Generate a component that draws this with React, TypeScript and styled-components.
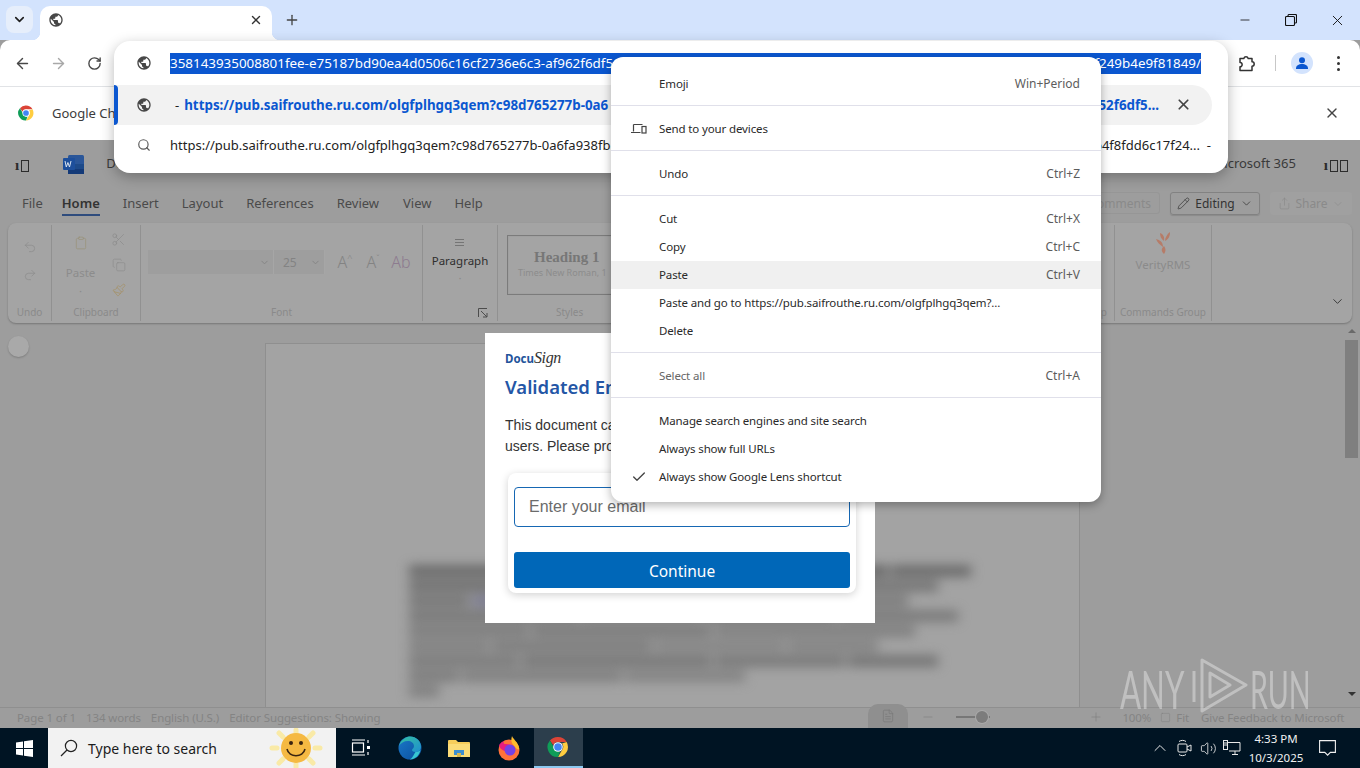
import React from 'react';
import styled, { createGlobalStyle } from 'styled-components';
import { ArrowLeft, ArrowRight, RotateCw, ChevronDown, X, Plus, Search, Scissors, Copy, Paintbrush, Pencil, Share, Undo2, Redo2, Clipboard, FileText, Minus, ChevronUp, Volume2, Check, Square } from 'lucide-react';

const Global = createGlobalStyle`
  html, body { margin: 0; padding: 0; width: 1360px; height: 768px; overflow: hidden; background: #9d9d9d; }
  * { box-sizing: border-box; }
  body { font-family: "Noto Sans", "Liberation Sans", sans-serif; }
`;
const Screen = styled.div`position: relative; width: 1360px; height: 768px; overflow: hidden; display: flex; flex-direction: column; background: #9d9d9d;`;

/* ---------- browser chrome ---------- */
const TabStrip = styled.div`height: 40px; background: #d3e3fd; display: flex; align-items: flex-end; padding-left: 6px; flex: none;`;
const TabSearch = styled.div`width: 27px; height: 27px; margin-bottom: 7px; border-radius: 8px; background: #e6eefb; display: flex; align-items: center; justify-content: center; color: #1f1f1f;`;
const Tab = styled.div`
  position: relative; width: 232px; height: 34px; margin-left: 7px; background: #fff; border-radius: 10px 10px 0 0;
  display: flex; align-items: center; justify-content: space-between; padding: 0 9px 6px 8px; color: #333;
  &::after { content: ""; position: absolute; right: -8px; bottom: 0; width: 8px; height: 8px; background: radial-gradient(circle at 100% 0, transparent 8px, #fff 8.5px); }
  &::before { content: ""; position: absolute; left: -8px; bottom: 0; width: 8px; height: 8px; background: radial-gradient(circle at 0 0, transparent 8px, #fff 8.5px); }
`;
const NewTab = styled.div`margin: 0 0 12px 12px; color: #444; display: flex;`;
const WinControls = styled.div`margin-left: auto; display: flex; height: 40px; align-items: center; color: #111;`;
const WinBtn = styled.div`width: 46px; display: flex; justify-content: center;`;
const Toolbar = styled.div`height: 47px; background: #fff; border-radius: 10px 10px 0 0; border-bottom: 1px solid #e1e3e6; display: flex; align-items: center; padding: 0 20px 0 13px; flex: none; color: #444;`;
const NavBtn = styled.div<{ $dim?: boolean }>`width: 36px; display: flex; justify-content: center; color: ${p => p.$dim ? '#a8a8a8' : '#474747'}; &:first-child { margin-left: -9px; }`;
const ToolRight = styled.div`margin-left: auto; display: flex; align-items: center; color: #333;`;
const Divider = styled.div`width: 1px; height: 16px; background: #c7c7c7; margin: 0 15px 0 18px;`;
const Avatar = styled.div`width: 22px; height: 22px; border-radius: 50%; background: #d3e3fd; display: flex; align-items: center; justify-content: center; margin-right: 24px;`;
const Kebab = styled.div`display: flex; flex-direction: column; gap: 3px; & i { width: 3px; height: 3px; border-radius: 50%; background: #333; }`;
const InfoBar = styled.div`height: 53px; background: #fff; flex: none; display: flex; align-items: center; padding: 0 20px 2px 17px; font-size: 13px; color: #3c3c3c;`;
const InfoText = styled.span`margin-left: 17px;`;
const InfoClose = styled.div`margin-left: auto; color: #444; display: flex;`;

/* ---------- omnibox popup ---------- */
const Popup = styled.div`position: absolute; left: 114px; top: 41px; width: 1114px; height: 132px; background: #fff; border-radius: 16px; box-shadow: 0 4px 14px rgba(0,0,0,.28); z-index: 5; font-size: 13px; color: #222;`;
const PopRow = styled.div<{ $h: number; $sel?: boolean }>`
  height: ${p => p.$h}px; display: flex; align-items: center; padding-left: 22px; position: relative;
  ${p => p.$sel ? `background: #f2f2f2; margin-right: 16px; border-radius: 0 20px 20px 0; &::before { content: ""; position: absolute; left: 0; top: 0; bottom: 0; width: 4px; background: #0b57d0; border-radius: 0 4px 4px 0; }` : ''}
`;
const GlobeSlot = styled.div`width: 34px; flex: none; display: flex; color: #5a5a5a;`;
const SearchSlot = styled.div`width: 34px; flex: none; display: flex; padding-left: 1px;`;
const Highlight = styled.div`width: 1031px; height: 21px; background: #0b57d0; color: #fff; display: flex; justify-content: space-between; align-items: center; white-space: nowrap; overflow: hidden; font-size: 13.4px;`;
const SelMain = styled.div`flex: 1; display: flex; align-items: center; padding-left: 5px; white-space: nowrap; overflow: hidden; margin-right: 53px; justify-content: space-between; font-size: 13px;`;
const Dash = styled.span`margin-right: 5px;`;
const Strong = styled.span`color: #0b57d0; font-weight: 700; font-size: 13.35px;`;
const CloseMatch = styled.div`position: absolute; right: 20px; top: 11px; color: #444; display: flex;`;
const PlainRow = styled.div`flex: 1; display: flex; justify-content: space-between; white-space: nowrap; overflow: hidden; padding-right: 17px; font-size: 13px;`;

/* ---------- context menu ---------- */
const Menu = styled.div`position: absolute; left: 611px; top: 57px; width: 490px; height: 445px; background: #fff; border-radius: 12px; box-shadow: 0 3px 10px rgba(0,0,0,.3); padding: 13px 0 11px; z-index: 6; font-size: 11.5px; letter-spacing: -.13px; color: #2a2a2a;`;
const MenuItem = styled.div<{ $hover?: boolean; $muted?: boolean }>`height: 28px; display: flex; align-items: center; padding: 0 21px 1px 48px; position: relative; background: ${p => p.$hover ? '#f0f0f0' : 'transparent'}; color: ${p => p.$muted ? '#666' : '#2a2a2a'};`;
const Shortcut = styled.span`margin-left: auto; color: #5c5c5c; font-size: 12px; letter-spacing: 0;`;
const MenuIcon = styled.span`position: absolute; left: 20px; top: 6px; display: flex; color: #444;`;
const MenuSep = styled.div`height: 1px; background: #e0e0ea; margin: 7px 0 9px;`;

/* ---------- word ---------- */
const Word = styled.div`flex: 1; display: flex; flex-direction: column; background: #9d9d9d; color: #333; font-size: 13px; min-height: 0;`;
const TitleRow = styled.div`height: 46px; display: flex; align-items: center; padding: 0 12px 0 15px; flex: none;`;
const Tofu = styled.span`display: inline-block; width: 8px; height: 12px; border: 1px solid #2c2c2c; margin-left: 2px;`;
const TofuText = styled.span`font-family: "Liberation Serif", serif; font-size: 15px; font-weight: 700; color: #2c2c2c; display: flex; align-items: center; margin-top: 5px;`;
const WordLogo = styled.div`margin-left: 34px; width: 21px; height: 19px; display: flex; margin-top: 2px;`;
const DocName = styled.span`margin-left: 22px; color: #3a3a3a;`;
const Brand = styled.span`margin-left: auto; margin-right: 28px; color: #3a3a3a; font-size: 13px;`;
const TabRow = styled.div`height: 37px; display: flex; align-items: flex-start; padding: 0 8px 0 22px; flex: none;`;
const RibbonTab = styled.div<{ $x: number; $active?: boolean }>`
  margin-right: ${p => p.$x}px; height: 30px; padding-top: 8px; color: ${p => p.$active ? '#333' : '#4a4a4a'}; font-weight: ${p => p.$active ? 600 : 400}; font-size: 13px;
  ${p => p.$active ? 'border-bottom: 2px solid #2f4c7d;' : ''}
`;
const TabActions = styled.div`margin-left: auto; display: flex; align-items: flex-start; gap: 10px; padding-top: 6px; font-size: 12px;`;
const CommentBtn = styled.div`width: 72px; height: 22px; border: 1px solid #969696; border-radius: 3px; color: #8a8a8a; display: flex; align-items: center; justify-content: flex-end; padding-right: 8px;`;
const EditBtn = styled.div`width: 90px; height: 23px; border: 1px solid #828282; border-radius: 3px; display: flex; align-items: center; justify-content: center; gap: 5px; color: #333; box-shadow: 0 1px 1px rgba(0,0,0,.12);`;
const ShareBtn = styled.div`width: 82px; height: 23px; border-radius: 3px; background: #a0a0a0; display: flex; align-items: center; justify-content: center; gap: 4px; color: #8a8a8a;`;
const Ribbon = styled.div`margin: 0 8px; height: 100px; background: #a4a4a4; border-radius: 8px; display: flex; flex: none; box-shadow: 0 1px 2px rgba(0,0,0,.25); color: #8c8c8c; font-size: 11.5px; padding: 2px 0 2px;`;
const Group = styled.div<{ $w: number; $plain?: boolean }>`
  width: ${p => p.$w}px; flex: none; display: flex; flex-direction: column; align-items: center; position: relative;
  border-right: ${p => p.$plain ? 'none' : '1px solid #919191'};
`;
const GroupBody = styled.div<{ $top?: number; $start?: boolean }>`flex: 1; width: 100%; display: flex; align-items: flex-start; justify-content: ${p => p.$start ? 'flex-start' : 'center'}; padding-top: ${p => p.$top || 0}px; padding-left: ${p => p.$start ? 6 : 0}px;`;
const GroupLabel = styled.div`font-size: 10px; height: 16px; line-height: 15px; color: #8a8a8a; white-space: nowrap;`;
const LabelRow = styled.div`width: 100%; display: flex; justify-content: space-between; padding: 0 7px 0 58px;`;
const Stack = styled.div<{ $gap: number }>`display: flex; flex-direction: column; align-items: center; gap: ${p => p.$gap}px; color: #8b8b8b;`;
const PasteCol = styled.div`display: flex; flex-direction: column; align-items: center; width: 45px; margin-top: 11px; margin-right: 8px; color: #8c8c8c; font-size: 11.5px; line-height: 16px;`;
const PasteLabel = styled.span`margin-top: 15px;`;
const PasteDot = styled.span`margin-top: 2px;`;
const ToolCol = styled.div`margin-top: 7px; display: flex; flex-direction: column; align-items: center; gap: 11px; color: #8b8b8b;`;
const Row = styled.div`display: flex; align-items: center;`;
const FontCombo = styled.div<{ $w: number }>`width: ${p => p.$w}px; height: 24px; background: #9e9e9e; display: flex; align-items: center; justify-content: flex-end; padding-right: 3px; border-right: 1px solid #a6a6a6; color: #838383; font-size: 12px;`;
const SizeVal = styled.span`margin-right: auto; padding-left: 9px;`;
const FontBtn = styled.span<{ $tone?: string }>`width: 28px; text-align: center; color: ${p => p.$tone || '#838383'}; font-size: 16px; font-weight: 300; position: relative; & sup { font-size: 9px; line-height: 0; }`;
const FontBtns = styled.div`display: flex; margin-left: 6px;`;
const ParaIcon = styled.div`display: flex; flex-direction: column; gap: 2px; & i { width: 9px; height: 1px; background: #757575; }`;
const ParaLabel = styled.span`color: #2f2f2f; margin-top: 5px;`;
const Launcher = styled.div`position: absolute; right: 9px; bottom: 3px; display: flex;`;
const StyleBox = styled.div`width: 107px; margin-left: 9px; height: 60px; margin-top: 10px; align-self: flex-start; border: 1px solid #7b7b7b; box-shadow: inset 0 0 0 1px #a0a0a0; padding: 13px 0 0 10px; overflow: hidden; white-space: nowrap;`;
const StyleHead = styled.div`font-family: "Liberation Serif", serif; font-weight: 700; font-size: 15px; color: #777; margin-left: 16px;`;
const StyleSub = styled.div`font-size: 9px; color: #8c8c8c;`;
const Canvas = styled.div`flex: 1; display: flex; min-height: 0; position: relative; padding: 20px 0 0 8px;`;
const SideBtn = styled.div`width: 21px; height: 21px; border-radius: 50%; background: #a9a9a9; flex: none; margin-top: -7px; box-shadow: 0 1px 2px rgba(0,0,0,.2);`;
const Page = styled.div`width: 815px; margin-left: 236px; background: #a3a3a3; border: 1px solid #8f8f8f; border-bottom: none; padding: 222px 93px 0 143px; overflow: hidden;`;
const BlurBlock = styled.div`filter: blur(6px); display: flex; flex-direction: column; gap: 5px;`;
const BlurLine = styled.div`display: flex; gap: 3px; height: 10px;`;
const BlurWord = styled.div<{ $w: number; $tone: string }>`height: 10px; width: ${p => p.$w}px; background: ${p => p.$tone};`;
const ScrollBar = styled.div`position: absolute; right: 2px; top: 6px; bottom: 11px; width: 13px; display: flex; flex-direction: column; align-items: center; color: #444;`;
const Thumb = styled.div`width: 13px; height: 118px; background: #7f7f7f; margin-top: 7px; margin-bottom: auto;`;
const Arrow = styled.div<{ $up?: boolean }>`width: 0; height: 0; border-left: 4px solid transparent; border-right: 4px solid transparent; ${p => p.$up ? 'border-bottom: 4px solid #6a6a6a;' : 'border-top: 4px solid #333;'}`;
const StatusBar = styled.div`height: 21px; flex: none; border-top: 1px solid #8f8f8f; display: flex; align-items: center; padding: 0 17px 2px; color: #848484; font-size: 11.5px; letter-spacing: -.1px; position: relative; white-space: nowrap; & > * { flex: none; }`;
const StatusText = styled.span<{ $gap?: number; $ml?: number }>`margin-right: ${p => p.$gap || 0}px; margin-left: ${p => p.$ml || 0}px;`;
const ViewBtn = styled.div`margin-left: 488px; width: 40px; height: 24px; margin-top: -2px; background: #8f8f8f; border-radius: 10px 10px 0 0; display: flex; align-items: center; justify-content: center; color: #7a7a7a;`;
const Slider = styled.div`width: 34px; height: 2px; background: #777; margin-left: 21px; position: relative; &::after { content: ""; position: absolute; right: 2px; top: -5px; width: 12px; height: 12px; border-radius: 50%; background: #7c7c7c; box-shadow: 0 0 0 1px #a9a9a9; }`;
const StatusIcon = styled.div<{ $ml: number }>`margin-left: ${p => p.$ml}px; display: flex; color: #7d7d7d;`;

/* ---------- modal ---------- */
const Modal = styled.div`position: absolute; left: 485px; top: 333px; width: 390px; height: 290px; background: #fff; padding: 16px 20px 0; z-index: 3; font-family: "Liberation Sans", Arial, sans-serif;`;
const Logo = styled.div`display: flex; align-items: baseline; height: 25px; color: #23549b; font-family: "Noto Sans", sans-serif; font-weight: 700; font-size: 11.5px;`;
const LogoScript = styled.span`font-family: "Liberation Serif", serif; font-style: italic; font-weight: 400; color: #333; font-size: 16px; letter-spacing: -.4px;`;
const ModalTitle = styled.div`font-family: "Noto Sans", sans-serif; font-size: 18.5px; font-weight: 600; color: #2456a6; line-height: 26px; white-space: nowrap;`;
const ModalBody = styled.div`margin-top: 15px; font-size: 14px; line-height: 21px; color: #333; white-space: nowrap;`;
const Card = styled.div`position: absolute; left: 23px; top: 140px; width: 348px; height: 120px; background: #fff; border-radius: 8px; box-shadow: 0 2px 8px rgba(0,0,0,.18); padding: 14px 6px 0;`;
const EmailInput = styled.div`height: 40px; border: 1px solid #1667b3; border-radius: 4px; padding-left: 14px; font-size: 16px; color: #6b6b6b; display: flex; align-items: center;`;
const Continue = styled.div`margin-top: 25px; height: 36px; background: #0067b8; border-radius: 3px; color: #fff; display: flex; align-items: center; justify-content: center; padding-top: 1px; font-family: "Noto Sans", sans-serif; font-size: 15.5px;`;

/* ---------- watermark ---------- */
const Watermark = styled.div`position: absolute; left: 1120px; top: 658px; height: 55px; display: flex; align-items: center; z-index: 2; color: rgba(255,255,255,.36); font-family: "Lato", "Liberation Sans", sans-serif; font-weight: 400; font-size: 52px; line-height: 1;`;
const WmText = styled.span<{ $w: number; $scale: number }>`display: block; width: ${p => p.$w}px; white-space: nowrap; margin-top: 6px; transform-origin: left center; transform: scaleX(${p => p.$scale});`;
const WmPlay = styled.div`width: 68px; padding-left: 10px; display: flex; flex: none;`;

/* ---------- taskbar ---------- */
const Taskbar = styled.div`height: 40px; background: #001423; flex: none; display: flex; align-items: stretch; color: #fff;`;
const StartBtn = styled.div`width: 48px; display: flex; align-items: center; justify-content: center;`;
const SearchBox = styled.div`width: 288px; background: #f2f2f2; display: flex; align-items: center; color: #1c1c1c; font-size: 14px; padding-left: 12px; position: relative; overflow: hidden;`;
const SearchLabel = styled.span`margin-left: 10px;`;
const Sun = styled.div`position: absolute; right: 11px; top: 0; display: flex;`;
const TaskIcon = styled.div<{ $active?: boolean }>`width: 49.4px; display: flex; align-items: center; justify-content: center; ${p => p.$active ? 'background: #2c3e4c; border-bottom: 2px solid #8cc8f0;' : ''}`;
const Tray = styled.div`margin-left: auto; display: flex; align-items: center; color: #e8e8e8;`;
const TrayIcon = styled.div`width: 24px; display: flex; justify-content: center;`;
const Clock = styled.div`width: 62px; margin-left: 1px; text-align: center; font-size: 11.5px; line-height: 19px; color: #f0f0f0;`;
const Notify = styled.div`margin: 0 24px 0 12px; display: flex;`;

/* ---------- drawings ---------- */
const Globe = ({ size = 16 }: { size?: number }) => (
  <svg width={size} height={size} viewBox="0 0 24 24" fill="#474747"><path d="M12 2C6.48 2 2 6.48 2 12s4.48 10 10 10 10-4.48 10-10S17.52 2 12 2zm-1 17.93c-3.95-.49-7-3.85-7-7.93 0-.62.08-1.21.21-1.79L9 15v1c0 1.1.9 2 2 2v1.93zm6.9-2.54c-.26-.81-1-1.39-1.9-1.39h-1v-3c0-.55-.45-1-1-1H8v-2h2c.55 0 1-.45 1-1V7h2c1.1 0 2-.9 2-2v-.41c2.93 1.19 5 4.06 5 7.41 0 2.08-.8 3.97-2.1 5.39z" /></svg>
);
const ChromeLogo = ({ size = 18 }: { size?: number }) => (
  <svg width={size} height={size} viewBox="0 0 48 48">
    <path fill="#db4437" d="M24 4a20 20 0 0 1 17.3 10H24a10 10 0 0 0-9.4 6.6L7.9 11A20 20 0 0 1 24 4z" />
    <path fill="#ffcd40" d="M41.3 14A20 20 0 0 1 24 44l8.7-15A10 10 0 0 0 32 17z" />
    <path fill="#0f9d58" d="M7.9 11l8.7 15a10 10 0 0 0 11.6 7.5L24 44A20 20 0 0 1 7.9 11z" />
    <circle cx="24" cy="24" r="9.6" fill="#fff" /><circle cx="24" cy="24" r="7.6" fill="#4285f4" />
  </svg>
);
const WordIcon = () => (
  <svg width="21" height="19" viewBox="0 0 21 19">
    <rect x="5" y="0" width="16" height="19" rx="1.5" fill="#2a5699" /><rect x="5" y="9" width="16" height="5" fill="#1d4a8a" /><rect x="5" y="14" width="16" height="5" fill="#143a78" />
    <rect x="0" y="3" width="12" height="12" rx="1" fill="#1d4f9c" />
    <path d="M2 6l1.3 6 1.6-4.5L6.5 12 8 6" stroke="#d9e3f0" strokeWidth="1" fill="none" />
  </svg>
);
const ExtensionIcon = () => (
  <svg width="20" height="20" viewBox="0 0 20 20" fill="none" stroke="#333" strokeWidth="1.5" strokeLinejoin="round">
    <path d="M3 5.5h3.8a2.3 2.3 0 0 1 4.4 0H15v3.3a2.2 2.2 0 0 1 0 4.4v4.300H3v-3.700a2 2 0 0 0 0-4.300z" />
  </svg>
);
const WinLogo = () => (
  <svg width="17" height="17" viewBox="0 0 17 17" fill="#fff"><path d="M0 2.4L7 1.4V8H0zM8 1.3L17 0V8H8zM0 9h7v6.6l-7-1zM8 9h9v8l-9-1.3z" /></svg>
);
const SearchGlass = () => (
  <svg width="18" height="18" viewBox="0 0 18 18" fill="none" stroke="#222" strokeWidth="1.2"><circle cx="11" cy="7" r="5.6" /><path d="M7 11l-6 6" /></svg>
);
const SmileSun = () => (
  <svg width="58" height="40" viewBox="0 0 58 40">
    <g stroke="#fbe99a" strokeWidth="5" strokeLinecap="round" opacity=".85">
      <path d="M29 2v3M29 36v3M5 20h5M48 20h5M12 5l4 4M46 5l-4 4M12 35l4-4M46 35l-4-4" />
    </g>
    <circle cx="29" cy="20" r="15" fill="#f5b942" />
    <circle cx="24" cy="15" r="2" fill="#3a2410" /><circle cx="34" cy="15" r="2" fill="#3a2410" />
    <path d="M20 21c2 9 16 9 18 0" stroke="#3a2410" strokeWidth="1.6" fill="none" />
  </svg>
);
const TaskView = () => (
  <svg width="20" height="20" viewBox="0 0 20 20" fill="none" stroke="#fff" strokeWidth="1.2">
    <rect x="1.5" y="5" width="11" height="9" /><path d="M1 2h13M1 17h13M17 2v3M17 14v3" /><rect x="16" y="8" width="3" height="3" fill="#fff" stroke="none" />
  </svg>
);
const Edge = () => (
  <svg width="24" height="24" viewBox="0 0 24 24">
    <defs>
      <linearGradient id="eg1" x1="0" y1="0" x2="1" y2="1"><stop offset="0" stopColor="#35c1a0" /><stop offset="1" stopColor="#1f8fd0" /></linearGradient>
      <linearGradient id="eg2" x1="0" y1="0" x2="1" y2="1"><stop offset="0" stopColor="#1a78c8" /><stop offset="1" stopColor="#0b4f9e" /></linearGradient>
    </defs>
    <circle cx="12" cy="12" r="11.5" fill="url(#eg2)" />
    <path d="M1 10C3 3 9 .5 12 .5c6 0 11 4.5 11 10.5 0 3-2.5 5-5.5 5-2 0-3.5-1-3.5-2 0-1 2-1.5 2-4 0-3-3-5-6-5-4 0-7.5 2-9 5z" fill="url(#eg1)" />
    <path d="M17.5 16c2 0 3.5-.5 5-2-1 5-5 9.5-11 9.5 3-1 3-3 6-7.500z" fill="#37c6d0" />
  </svg>
);
const Folder = () => (
  <svg width="22" height="20" viewBox="0 0 22 20">
    <path d="M0 3a1 1 0 0 1 1-1h7l2 2h11a1 1 0 0 1 1 1v13a1 1 0 0 1-1 1H1a1 1 0 0 1-1-1z" fill="#f6cd5b" />
    <rect x="0" y="6" width="22" height="13" fill="#fbdc78" />
    <rect x="6" y="12" width="10" height="5" fill="#3d8ed0" /><rect x="9" y="15" width="4" height="4" fill="#d8b64d" />
  </svg>
);
const Firefox = () => (
  <svg width="24" height="26" viewBox="0 0 24 26">
    <circle cx="12" cy="15" r="10.5" fill="#ff7139" />
    <path d="M15 1c1 3 6 6 7 12 1 2-2 2-4-1-2-3-5-4-3-11z" fill="#ffbd2e" />
    <path d="M2 10c1-2 3-3 5-4-1 2 0 3 2 3 3 0 6 1 6 4s-3 3-5 3c-4 0-7-2-8-6z" fill="#e31587" opacity=".9" />
    <circle cx="13" cy="15" r="5.5" fill="#7542e5" />
  </svg>
);
const SendDevice = () => (
  <svg width="16" height="16" viewBox="0 0 16 16" fill="none" stroke="#444" strokeWidth="1.2">
    <path d="M2.5 3.5h9M2.5 3.5v7M0 11.5h9.5" /><rect x="11" y="5.5" width="4" height="6.5" />
  </svg>
);
const PersonIcon = () => (
  <svg width="16" height="16" viewBox="0 0 24 24" fill="#0b57d0"><circle cx="12" cy="8" r="4.5" /><path d="M3 20c0-4 4-6.5 9-6.5s9 2.5 9 6.5v1H3z" /></svg>
);
const Restore = () => (
  <svg width="12" height="12" viewBox="0 0 12 12" fill="none" stroke="#111" strokeWidth="1.1"><rect x=".5" y="2.5" width="9" height="9" rx="1" /><path d="M3 2.5V1.5a1 1 0 0 1 1-1h6.5a1 1 0 0 1 1 1V8a1 1 0 0 1-1 1h-1" /></svg>
);
const PlayMark = () => (
  <svg width="56" height="55" viewBox="0 0 56 55" fill="none" stroke="rgba(255,255,255,.36)" strokeWidth="3" strokeLinejoin="round">
    <path d="M2 13v31M10 2l44 25-44 26zM18 15l20 12-20 12z" />
  </svg>
);
const MeetIcon = () => (
  <svg width="16" height="18" viewBox="0 0 16 18" fill="none" stroke="#e8e8e8" strokeWidth="1"><rect x="2" y="5" width="9" height="8" rx="1" /><path d="M11 8l4-2v6l-4-2M3 2.5c2-1.5 5-1.5 7 0M3 15.5c2 1.5 5 1.5 7 0" /></svg>
);
const NetIcon = () => (
  <svg width="18" height="16" viewBox="0 0 18 16" fill="none" stroke="#e8e8e8" strokeWidth="1"><path d="M4.5 2.5H17V11H6" /><path d="M9 14.500h6M12 11v3.500" /><rect x=".5" y=".5" width="4" height="9" /><path d="M1 3h3M1 5h3" /></svg>
);
const NotifyIcon = () => (
  <svg width="17" height="16" viewBox="0 0 17 16" fill="none" stroke="#f0f0f0" strokeWidth="1.1"><path d="M.6.6h15.8v11.8h-5l-2.8 2.8-2.8-2.8H.6z" /></svg>
);
const VerityLeaf = () => (
  <svg width="16" height="24" viewBox="0 0 16 24" fill="#b67c68"><path d="M9 11C6 9 5 6 5 3c3 1 5 4 4 8zM10 11c0-3 2-7 5-9 0 4-1 7-5 9zM8 17C5 15 2 12 1 9c4 1 7 3 7 8zM9 24c-3-3-3-5 0-8 2 3 2 5 0 8z" /></svg>
);
const LauncherIcon = () => (
  <svg width="10" height="10" viewBox="0 0 10 10" fill="none" stroke="#4c4c4c" strokeWidth="1"><path d="M.5 9V.5H9M3 3l6 6M5 9h4V5" /></svg>
);

const blur: [number, string][][] = [
  [[90, '#606060'], [130, '#5c5c5c'], [110, '#626262'], [140, '#5e5e5e'], [80, '#626262']],
  [[140, '#686868'], [170, '#6e6e6e'], [120, '#686868'], [90, '#6f6f6f']],
  [[60, '#6e6e6e'], [80, '#74748c'], [150, '#707070'], [200, '#767676']],
  [[170, '#707070'], [120, '#767676'], [130, '#6e6e6e'], [120, '#747474']],
  [[120, '#767676'], [180, '#747474'], [200, '#7a7a7a']],
  [[80, '#7a7a7a'], [160, '#767676'], [130, '#808080'], [90, '#7e7e7e']],
  [[110, '#747474'], [190, '#707070'], [130, '#727272'], [90, '#6e6e6e']],
  [[50, '#767676'], [160, '#7a7a7a'], [120, '#7e7e7e']],
  [[30, '#7a7a7a']],
];

export default function App() {
  return (
    <Screen>
      <Global />
      <TabStrip>
        <TabSearch><ChevronDown size={15} strokeWidth={2.6} /></TabSearch>
        <Tab><Globe size={16} /><X size={14} strokeWidth={2.4} /></Tab>
        <NewTab><Plus size={16} strokeWidth={2} /></NewTab>
        <WinControls>
          <WinBtn><Minus size={14} strokeWidth={1.4} /></WinBtn>
          <WinBtn><Restore /></WinBtn>
          <WinBtn><X size={17} strokeWidth={1.3} /></WinBtn>
        </WinControls>
      </TabStrip>
      <Toolbar>
        <NavBtn><ArrowLeft size={17} strokeWidth={2} /></NavBtn>
        <NavBtn $dim><ArrowRight size={17} strokeWidth={2} /></NavBtn>
        <NavBtn><RotateCw size={15} strokeWidth={2.2} /></NavBtn>
        <ToolRight>
          <ExtensionIcon />
          <Divider />
          <Avatar><PersonIcon /></Avatar>
          <Kebab><i /><i /><i /></Kebab>
        </ToolRight>
      </Toolbar>
      <InfoBar>
        <ChromeLogo />
        <InfoText>Google Chrome</InfoText>
        <InfoClose><X size={16} strokeWidth={2} /></InfoClose>
      </InfoBar>
      <Word>
        <TitleRow>
          <TofuText>ı<Tofu /></TofuText>
          <WordLogo><WordIcon /></WordLogo>
          <DocName>Document</DocName>
          <Brand>Microsoft 365</Brand>
          <TofuText>ı<Tofu /><Tofu /></TofuText>
        </TitleRow>
        <TabRow>
          <RibbonTab $x={19}>File</RibbonTab>
          <RibbonTab $x={23} $active>Home</RibbonTab>
          <RibbonTab $x={23}>Insert</RibbonTab>
          <RibbonTab $x={23}>Layout</RibbonTab>
          <RibbonTab $x={23}>References</RibbonTab>
          <RibbonTab $x={24}>Review</RibbonTab>
          <RibbonTab $x={23}>View</RibbonTab>
          <RibbonTab $x={0}>Help</RibbonTab>
          <TabActions>
            <CommentBtn>Comments</CommentBtn>
            <EditBtn><Pencil size={13} strokeWidth={1.3} />Editing<ChevronDown size={13} strokeWidth={1.4} /></EditBtn>
            <ShareBtn><Share size={13} strokeWidth={1.2} />Share<ChevronDown size={12} strokeWidth={1.2} /></ShareBtn>
          </TabActions>
        </TabRow>
        <Ribbon>
          <Group $w={44}>
            <GroupBody $top={15}><Stack $gap={14}><Undo2 size={14} strokeWidth={1.2} /><Redo2 size={14} strokeWidth={1.2} /></Stack></GroupBody>
            <GroupLabel>Undo</GroupLabel>
          </Group>
          <Group $w={89}>
            <GroupBody $start>
              <PasteCol>
                <Clipboard size={14} strokeWidth={1.2} color="#9a9278" />
                <PasteLabel>Paste</PasteLabel>
                <PasteDot>·</PasteDot>
              </PasteCol>
              <ToolCol>
                <Scissors size={15} strokeWidth={1.1} />
                <Copy size={14} strokeWidth={1.1} />
                <Paintbrush size={14} strokeWidth={1.2} color="#a58f62" />
              </ToolCol>
            </GroupBody>
            <GroupLabel>Clipboard</GroupLabel>
          </Group>
          <Group $w={282}>
            <GroupBody $top={25}>
              <Row>
                <FontCombo $w={126}><ChevronDown size={11} /></FontCombo>
                <FontCombo $w={51}><SizeVal>25</SizeVal><ChevronDown size={11} /></FontCombo>
                <FontBtns>
                  <FontBtn>A<sup>^</sup></FontBtn>
                  <FontBtn>A<sup>ˇ</sup></FontBtn>
                  <FontBtn $tone="#8d7b8f">Ab</FontBtn>
                </FontBtns>
              </Row>
            </GroupBody>
            <GroupLabel>Font</GroupLabel>
          </Group>
          <Group $w={75}>
            <GroupBody $top={14}>
              <Stack $gap={2}><ParaIcon><i /><i /><i /></ParaIcon><ParaLabel>Paragraph</ParaLabel><span>·</span></Stack>
            </GroupBody>
            <GroupLabel>&nbsp;</GroupLabel>
            <Launcher><LauncherIcon /></Launcher>
          </Group>
          <Group $w={617}>
            <StyleBox><StyleHead>Heading 1</StyleHead><StyleSub>Times New Roman, 1</StyleSub></StyleBox>
            <GroupBody />
            <LabelRow><GroupLabel>Styles</GroupLabel><GroupLabel>Group</GroupLabel></LabelRow>
          </Group>
          <Group $w={97}>
            <GroupBody $top={5}><Stack $gap={3}><VerityLeaf /><span>VerityRMS</span></Stack></GroupBody>
            <GroupLabel>Commands Group</GroupLabel>
          </Group>
          <Group $w={140} $plain>
            <GroupBody />
            <ChevronDown size={15} strokeWidth={1.5} color="#333" style={{ position: 'absolute', right: 7, bottom: 12 }} />
          </Group>
        </Ribbon>
        <Canvas>
          <SideBtn />
          <Page>
            <BlurBlock>
              {blur.map((line, i) => (
                <BlurLine key={i}>{line.map(([w, tone], j) => <BlurWord key={j} $w={w} $tone={tone} />)}</BlurLine>
              ))}
            </BlurBlock>
          </Page>
          <ScrollBar><Arrow $up /><Thumb /><Arrow /></ScrollBar>
        </Canvas>
        <StatusBar>
          <StatusText $gap={10}>Page 1 of 1</StatusText>
          <StatusText $gap={10}>134 words</StatusText>
          <StatusText $gap={10}>English (U.S.)</StatusText>
          <StatusText>Editor Suggestions: Showing</StatusText>
          <ViewBtn><FileText size={14} strokeWidth={1.4} /></ViewBtn>
          <StatusIcon $ml={13}><Minus size={14} strokeWidth={1} /></StatusIcon>
          <Slider />
          <StatusIcon $ml={99}><Plus size={14} strokeWidth={1} /></StatusIcon>
          <StatusText $ml={19} $gap={9}>100%</StatusText>
          <StatusIcon $ml={0}><Square size={11} strokeWidth={1} /></StatusIcon>
          <StatusText $ml={5} $gap={12}>Fit</StatusText>
          <StatusText>Give Feedback to Microsoft</StatusText>
        </StatusBar>
      </Word>
      <Taskbar>
        <StartBtn><WinLogo /></StartBtn>
        <SearchBox>
          <SearchGlass />
          <SearchLabel>Type here to search</SearchLabel>
          <Sun><SmileSun /></Sun>
        </SearchBox>
        <TaskIcon><TaskView /></TaskIcon>
        <TaskIcon><Edge /></TaskIcon>
        <TaskIcon><Folder /></TaskIcon>
        <TaskIcon><Firefox /></TaskIcon>
        <TaskIcon $active><ChromeLogo size={24} /></TaskIcon>
        <Tray>
          <TrayIcon><ChevronUp size={20} strokeWidth={1.2} /></TrayIcon>
          <TrayIcon><MeetIcon /></TrayIcon>
          <TrayIcon><Volume2 size={17} strokeWidth={1.2} /></TrayIcon>
          <TrayIcon><NetIcon /></TrayIcon>
          <Clock>4:33 PM<br />10/3/2025</Clock>
          <Notify><NotifyIcon /></Notify>
        </Tray>
      </Taskbar>

      <Modal>
        <Logo>Docu<LogoScript>Sign</LogoScript></Logo>
        <ModalTitle>Validated Email</ModalTitle>
        <ModalBody>This document can only be viewed by validated<br />users. Please provide your email</ModalBody>
        <Card>
          <EmailInput>Enter your email</EmailInput>
          <Continue>Continue</Continue>
        </Card>
      </Modal>

      <Watermark>
        <WmText $w={62} $scale={0.6}>ANY</WmText>
        <WmPlay><PlayMark /></WmPlay>
        <WmText $w={60} $scale={0.55}>RUN</WmText>
      </Watermark>

      <Popup>
        <PopRow $h={44}>
          <GlobeSlot><Globe /></GlobeSlot>
          <Highlight><span>358143935008801fee-e75187bd90ea4d0506c16cf2736e6c3-af962f6df56</span><span>f249b4e9f81849/</span></Highlight>
        </PopRow>
        <PopRow $h={40} $sel>
          <GlobeSlot><Globe /></GlobeSlot>
          <SelMain><span><Dash>-</Dash><Strong>https://pub.saifrouthe.ru.com/olgfplhgq3qem?c98d765277b-0a6</Strong></span><Strong>52f6df5...</Strong></SelMain>
          <CloseMatch><X size={17} strokeWidth={2.4} /></CloseMatch>
        </PopRow>
        <PopRow $h={40}>
          <SearchSlot><Search size={14} strokeWidth={2} color="#5a5a5a" /></SearchSlot>
          <PlainRow><span>https://pub.saifrouthe.ru.com/olgfplhgq3qem?c98d765277b-0a6fa938fb</span><span>b4f8fdd6c17f24... &nbsp;-</span></PlainRow>
        </PopRow>
      </Popup>

      <Menu>
        <MenuItem>Emoji<Shortcut>Win+Period</Shortcut></MenuItem>
        <MenuSep />
        <MenuItem><MenuIcon><SendDevice /></MenuIcon>Send to your devices</MenuItem>
        <MenuSep />
        <MenuItem>Undo<Shortcut>Ctrl+Z</Shortcut></MenuItem>
        <MenuSep />
        <MenuItem>Cut<Shortcut>Ctrl+X</Shortcut></MenuItem>
        <MenuItem>Copy<Shortcut>Ctrl+C</Shortcut></MenuItem>
        <MenuItem $hover>Paste<Shortcut>Ctrl+V</Shortcut></MenuItem>
        <MenuItem>Paste and go to https://pub.saifrouthe.ru.com/olgfplhgq3qem?...</MenuItem>
        <MenuItem>Delete</MenuItem>
        <MenuSep />
        <MenuItem $muted>Select all<Shortcut>Ctrl+A</Shortcut></MenuItem>
        <MenuSep />
        <MenuItem>Manage search engines and site search</MenuItem>
        <MenuItem>Always show full URLs</MenuItem>
        <MenuItem><MenuIcon><Check size={16} strokeWidth={2} /></MenuIcon>Always show Google Lens shortcut</MenuItem>
      </Menu>
    </Screen>
  );
}
